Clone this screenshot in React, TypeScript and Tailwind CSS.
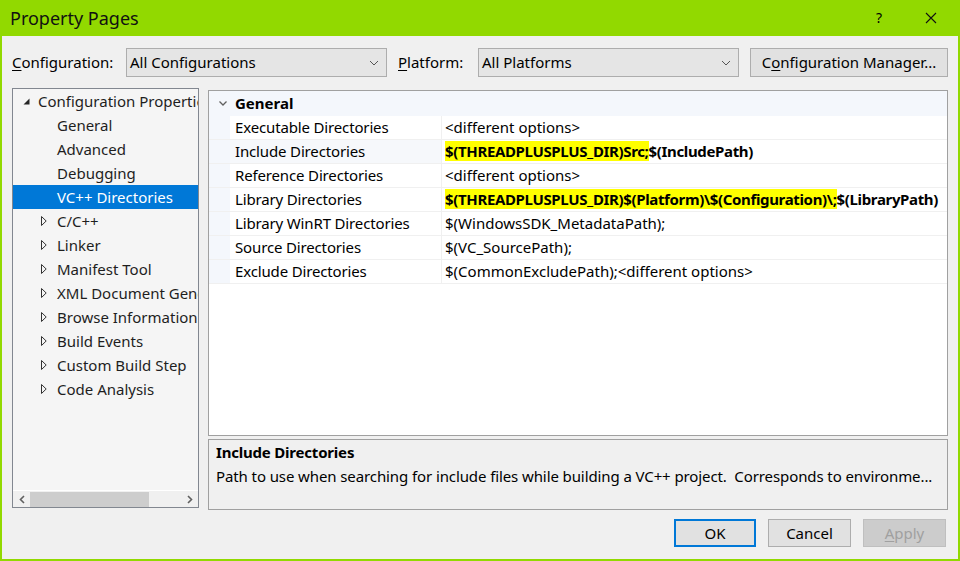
import React from 'react';

const FONT = { fontFamily: '"Noto Sans", "Open Sans", Arial, sans-serif' };

// Triângulo expandido (raiz da árvore)
const Expanded = () => (
  <svg width="7" height="7" viewBox="0 0 7 7" className="shrink-0">
    <polygon points="6.5,0.5 6.5,6.5 0.5,6.5" fill="#262626" />
  </svg>
);

// Triângulo recolhido (filhos)
const Collapsed = () => (
  <svg width="6" height="10" viewBox="0 0 6 10" className="shrink-0">
    <polygon points="0.5,0.5 5.2,5 0.5,9.5" fill="none" stroke="#333" strokeWidth="1" />
  </svg>
);

const ComboArrow = () => (
  <svg width="10" height="6" viewBox="0 0 10 6">
    <polyline points="1,1 5,5 9,1" fill="none" stroke="#555" strokeWidth="1" />
  </svg>
);

interface TreeItem {
  label: string;
  kind: 'leaf' | 'collapsed';
  selected?: boolean;
}

const treeItems: TreeItem[] = [
  { label: 'General', kind: 'leaf' },
  { label: 'Advanced', kind: 'leaf' },
  { label: 'Debugging', kind: 'leaf' },
  { label: 'VC++ Directories', kind: 'leaf', selected: true },
  { label: 'C/C++', kind: 'collapsed' },
  { label: 'Linker', kind: 'collapsed' },
  { label: 'Manifest Tool', kind: 'collapsed' },
  { label: 'XML Document Generator', kind: 'collapsed' },
  { label: 'Browse Information', kind: 'collapsed' },
  { label: 'Build Events', kind: 'collapsed' },
  { label: 'Custom Build Step', kind: 'collapsed' },
  { label: 'Code Analysis', kind: 'collapsed' },
];

interface Prop {
  name: string;
  value: React.ReactNode;
  shaded?: boolean;
}

const Hl: React.FC<{ children: React.ReactNode }> = ({ children }) => (
  <span className="bg-[#ffff00]">{children}</span>
);

const props: Prop[] = [
  { name: 'Executable Directories', value: '<different options>' },
  {
    name: 'Include Directories',
    shaded: true,
    value: (
      <span className="font-bold tracking-[-0.35px]">
        <Hl>$(THREADPLUSPLUS_DIR)Src;</Hl>$(IncludePath)
      </span>
    ),
  },
  { name: 'Reference Directories', value: '<different options>' },
  {
    name: 'Library Directories',
    value: (
      <span className="font-bold tracking-[-0.35px]">
        <Hl>$(THREADPLUSPLUS_DIR)$(Platform)\$(Configuration)\;</Hl>$(LibraryPath)
      </span>
    ),
  },
  { name: 'Library WinRT Directories', value: '$(WindowsSDK_MetadataPath);' },
  { name: 'Source Directories', value: '$(VC_SourcePath);' },
  { name: 'Exclude Directories', value: '$(CommonExcludePath);<different options>' },
];

export default function App() {
  return (
    <div
      className="w-[960px] h-[561px] bg-[#92d900] flex flex-col text-[15px] text-black leading-none select-none"
      style={FONT}
    >
      {/* Barra de título */}
      <div className="h-[36px] shrink-0 flex items-center pl-[10px]">
        <span className="text-[18px] text-[#111]">Property Pages</span>
        <span className="ml-auto w-[46px] text-center text-[14px]">?</span>
        <span className="w-[58px] flex justify-center">
          <svg width="12" height="12" viewBox="0 0 12 12">
            <path d="M1,1 L11,11 M11,1 L1,11" stroke="#111" strokeWidth="1.1" />
          </svg>
        </span>
      </div>

      {/* Corpo da janela */}
      <div className="flex-1 ml-[2px] mr-[2px] mb-[2px] bg-[#f0f0f0] flex flex-col pl-[10px] pr-[10px]">
        {/* Configuração / Plataforma */}
        <div className="mt-[12px] h-[29px] flex items-center">
          <span className="w-[114px]">
            <span className="underline underline-offset-2">C</span>onfiguration:
          </span>
          <div className="w-[261px] h-[29px] border border-[#adadad] bg-[#e5e5e5] flex items-center pl-[3px] pr-[7px]">
            <span>All Configurations</span>
            <span className="ml-auto"><ComboArrow /></span>
          </div>
          <span className="ml-[11px] w-[80px]">
            <span className="underline underline-offset-2">P</span>latform:
          </span>
          <div className="w-[261px] h-[29px] border border-[#adadad] bg-[#e5e5e5] flex items-center pl-[3px] pr-[7px]">
            <span>All Platforms</span>
            <span className="ml-auto"><ComboArrow /></span>
          </div>
          <div className="ml-[11px] w-[198px] h-[29px] border border-[#adadad] bg-[#e1e1e1] flex items-center justify-center">
            <span>
              C<span className="underline underline-offset-2">o</span>nfiguration Manager...
            </span>
          </div>
        </div>

        {/* Área principal */}
        <div className="mt-[11px] flex">
          {/* Árvore */}
          <div className="w-[187px] h-[420px] border border-[#828790] bg-[#f5f5f5] flex flex-col shrink-0">
            <div className="flex-1 overflow-hidden">
              <div className="h-[24px] flex items-center pl-[10px] whitespace-nowrap">
                <Expanded />
                <span className="ml-[8px] text-[#1e1e1e]">Configuration Properties</span>
              </div>
              {treeItems.map((item) => (
                <div
                  key={item.label}
                  className={`h-[24px] flex items-center whitespace-nowrap ${
                    item.selected ? 'bg-[#0078d7] text-white' : 'text-[#1e1e1e]'
                  }`}
                >
                  <span className="w-[44px] flex justify-end pr-[10px] shrink-0">
                    {item.kind === 'collapsed' && <Collapsed />}
                  </span>
                  <span>{item.label}</span>
                </div>
              ))}
            </div>
            {/* Barra de rolagem horizontal */}
            <div className="h-[17px] bg-[#f0f0f0] border-t border-white flex items-center">
              <span className="w-[17px] flex justify-center">
                <svg width="6" height="9" viewBox="0 0 6 9">
                  <polyline points="5,1 1.5,4.5 5,8" fill="none" stroke="#606060" strokeWidth="1.6" />
                </svg>
              </span>
              <div className="w-[119px] h-[15px] bg-[#cdcdcd]" />
              <span className="ml-auto w-[17px] flex justify-center">
                <svg width="6" height="9" viewBox="0 0 6 9">
                  <polyline points="1,1 4.5,4.5 1,8" fill="none" stroke="#606060" strokeWidth="1.6" />
                </svg>
              </span>
            </div>
          </div>

          {/* Coluna direita */}
          <div className="ml-[9px] w-[740px] min-w-0 flex flex-col pt-[2px]">
            {/* Grade de propriedades */}
            <div className="h-[346px] border border-[#a0a0a0] bg-white flex flex-col overflow-hidden">
              <div className="h-[25px] bg-[#f4f7fc] flex items-center">
                <span className="w-[26px] flex justify-center pl-[2px]">
                  <svg width="8" height="5" viewBox="0 0 8 5">
                    <polyline points="0.5,0.5 4,4 7.5,0.5" fill="none" stroke="#606060" strokeWidth="1.3" />
                  </svg>
                </span>
                <span className="font-bold">General</span>
              </div>
              {props.map((p) => (
                <div key={p.name} className="h-[24px] flex border-b border-[#f0f0f0]">
                  <div className="w-[21px] bg-[#f4f7fc] shrink-0" />
                  <div
                    className={`w-[212px] shrink-0 flex items-center pl-[5px] border-r border-[#f0f0f0] ${
                      p.shaded ? 'bg-[#f6f8fb]' : ''
                    }`}
                  >
                    <span className="whitespace-nowrap tracking-[-0.15px]">{p.name}</span>
                  </div>
                  <div className="flex-1 min-w-0 flex items-center pl-[3px] whitespace-nowrap overflow-hidden">
                    {p.value}
                  </div>
                </div>
              ))}
            </div>

            {/* Descrição */}
            <div className="mt-[3px] h-[71px] border border-[#a0a0a0] bg-[#f0f0f0] pl-[7px] pt-[1px]">
              <div className="font-bold h-[22px] flex items-center tracking-[-0.2px]">Include Directories</div>
              <div className="mt-[2px] h-[22px] flex items-center whitespace-nowrap tracking-[-0.1px]">
                Path to use when searching for include files while building a VC++ project.&nbsp; Corresponds to environme...
              </div>
            </div>
          </div>
        </div>

        {/* Botões */}
        <div className="mt-[9px] flex justify-end gap-[12px] pr-[2px]">
          <div className="w-[82px] h-[28px] border-2 border-[#0078d7] bg-[#e1e1e1] flex items-center justify-center">
            OK
          </div>
          <div className="w-[83px] h-[28px] border border-[#adadad] bg-[#e1e1e1] flex items-center justify-center">
            Cancel
          </div>
          <div className="w-[83px] h-[28px] border border-[#bfbfbf] bg-[#cccccc] text-[#a0a0a0] flex items-center justify-center">
            <span>
              <span className="underline underline-offset-2">A</span>pply
            </span>
          </div>
        </div>
      </div>
    </div>
  );
}
